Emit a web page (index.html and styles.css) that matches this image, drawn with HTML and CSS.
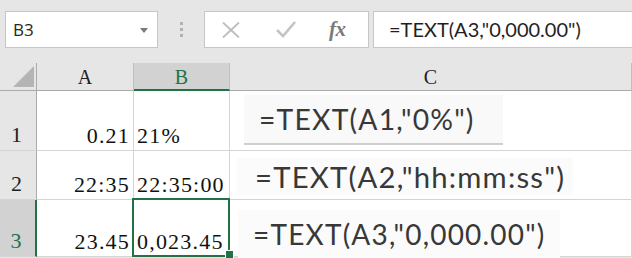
FILE: index.html
```html
<!DOCTYPE html>
<html>
<head>
<meta charset="utf-8">
<link rel="stylesheet" href="styles.css">
</head>
<body>
<div class="app">
  <div class="toolbar">
    <div class="namebox">
      <span class="name">B3</span>
      <svg class="caret" width="8" height="5" viewBox="0 0 8 5"><path d="M0 0H8L4 5Z" fill="#7a7a7a"/></svg>
    </div>
    <div class="dots"><i></i><i></i><i></i></div>
    <div class="btns">
      <svg class="ico" width="18" height="16" viewBox="0 0 18 16"><path d="M1 0.5L17 15.5M17 0.5L1 15.5" stroke="#bdbdbd" stroke-width="1.8" fill="none"/></svg>
      <svg class="ico" width="20" height="17" viewBox="0 0 20 17"><path d="M1 9L7 15L19 1" stroke="#c4c4c4" stroke-width="2.6" fill="none"/></svg>
      <span class="fx">fx</span>
    </div>
    <div class="formula">=TEXT(A3,"0,000.00")</div>
  </div>
  <div class="sheet">
    <div class="hd corner"><svg width="21" height="21" viewBox="0 0 21 21"><path d="M21 0V21H0Z" fill="#b4b4b4"/></svg></div>
    <div class="hd col">A</div>
    <div class="hd col sel-col">B</div>
    <div class="hd col">C</div>

    <div class="hd row">1</div>
    <div class="cell num">0.21</div>
    <div class="cell txt">21%</div>
    <div class="cell c"><div class="shot s1">=TEXT(A1,"0%")</div></div>

    <div class="hd row">2</div>
    <div class="cell num">22:35</div>
    <div class="cell txt">22:35:00</div>
    <div class="cell c"><div class="shot s2">=TEXT(A2,"hh:mm:ss")</div></div>

    <div class="hd row sel-row">3</div>
    <div class="cell num">23.45</div>
    <div class="cell txt active">0,023.45<div class="selbox"></div><span class="handle"></span></div>
    <div class="cell c"><div class="shot s3">=TEXT(A3,"0,000.00")</div></div>
  </div>
</div>
</body>
</html>
```

FILE: styles.css
```css
* { box-sizing: border-box; }
html, body { margin: 0; padding: 0; }
body { width: 632px; height: 258px; overflow: hidden; background: #e6e6e6; }
.app { width: 632px; }

.toolbar {
  height: 63px;
  padding: 11px 0 0 5px;
  display: flex;
  align-items: flex-start;
}
.namebox {
  width: 153px; height: 37px;
  background: #fff;
  border: 1px solid #c6c6c6;
  display: flex; align-items: center; justify-content: space-between;
  padding: 0 9px 0 7px;
}
.name { font-family: "Open Sans", sans-serif; font-size: 17px; color: #262626; }
.caret { margin-top: 1px; }
.dots {
  width: 46px; height: 37px;
  display: flex; flex-direction: column; align-items: center; justify-content: center; gap: 3px;
}
.dots i { display: block; width: 3px; height: 3px; background: #b2b2b2; }
.btns {
  width: 165px; height: 37px;
  background: #fff;
  border: 1px solid #c6c6c6;
  display: flex; align-items: center;
  padding-left: 17px;
}
.btns .ico:nth-child(1) { margin-right: 36px; }
.btns .ico:nth-child(2) { margin-right: 33px; }
.fx {
  font-family: "Liberation Serif", serif; font-style: italic; font-size: 21px;
  color: #7a7a7a; font-weight: bold; letter-spacing: -0.5px;
}
.formula {
  flex: 1; height: 37px;
  margin-left: 4px; margin-right: -2px;
  background: #fff;
  border: 1px solid #c6c6c6;
  font-family: Lato, sans-serif; font-size: 20px; color: #1f1f1f;
  display: flex; align-items: center; padding-left: 15px; padding-bottom: 1px;
}

.sheet {
  display: grid;
  grid-template-columns: 37px 97px 96px 402px;
  grid-template-rows: 28px 60px 49px 57px;
}
.hd {
  background: #e6e6e6;
  border-right: 1px solid #bfbfbf;
  border-bottom: 1px solid #ababab;
  font-family: "Liberation Serif", serif;
  color: #1e1e1e;
  display: flex; justify-content: center;
}
.corner { align-items: flex-end; justify-content: flex-end; padding: 0 2px 3px 0; border-right-color: #ababab; }
.corner svg { display: block; }
.col { font-size: 20px; align-items: center; padding-top: 2px; }
.sel-col { background: #d2d2d2; color: #217346; border-bottom: 2px solid #217346; }
.row { font-size: 22px; align-items: flex-end; padding-bottom: 2px; padding-right: 3px; border-right-color: #ababab; border-bottom-color: #d4d4d4; }
.sel-row { background: #d2d2d2; color: #217346; border-right: 2px solid #217346; }

.cell {
  background: #fff;
  border-right: 1px solid #d4d4d4;
  border-bottom: 1px solid #d4d4d4;
  font-family: "Liberation Serif", serif;
  font-size: 22px; letter-spacing: 1.2px;
  color: #111;
  display: flex; align-items: flex-end;
  padding-bottom: 1px;
  position: relative;
}
.num { justify-content: flex-end; padding-right: 3px; }
.txt { padding-left: 3px; }
.active { z-index: 2; }
.selbox {
  position: absolute; left: -2px; top: -2px; right: -1px; bottom: -1px;
  border: 2px solid #217346;
}
.handle {
  position: absolute; left: 92px; top: 51px;
  width: 7px; height: 7px;
  background: #217346;
  box-shadow: 0 0 0 1px #fff;
}
.c { align-items: flex-start; overflow: visible; }

.shot {
  font-family: Lato, sans-serif; color: #383838;
  background: #f9f9f9;
  display: flex; align-items: center;
  white-space: nowrap;
}
.s1 { margin: 4px 0 0 14px; width: 259px; height: 50px; padding-left: 15px; border-bottom: 2px solid #cfcfcf; font-size: 28.3px; }
.s2 { margin: 7px 0 0 7px; width: 336px; height: 37px; padding-left: 18px; background: #fbfbfb; font-size: 29.3px; }
.s3 { margin: 10px 0 0 8px; width: 322px; height: 48px; padding-left: 15px; background: #fbfbfb; font-size: 28px; }
```
